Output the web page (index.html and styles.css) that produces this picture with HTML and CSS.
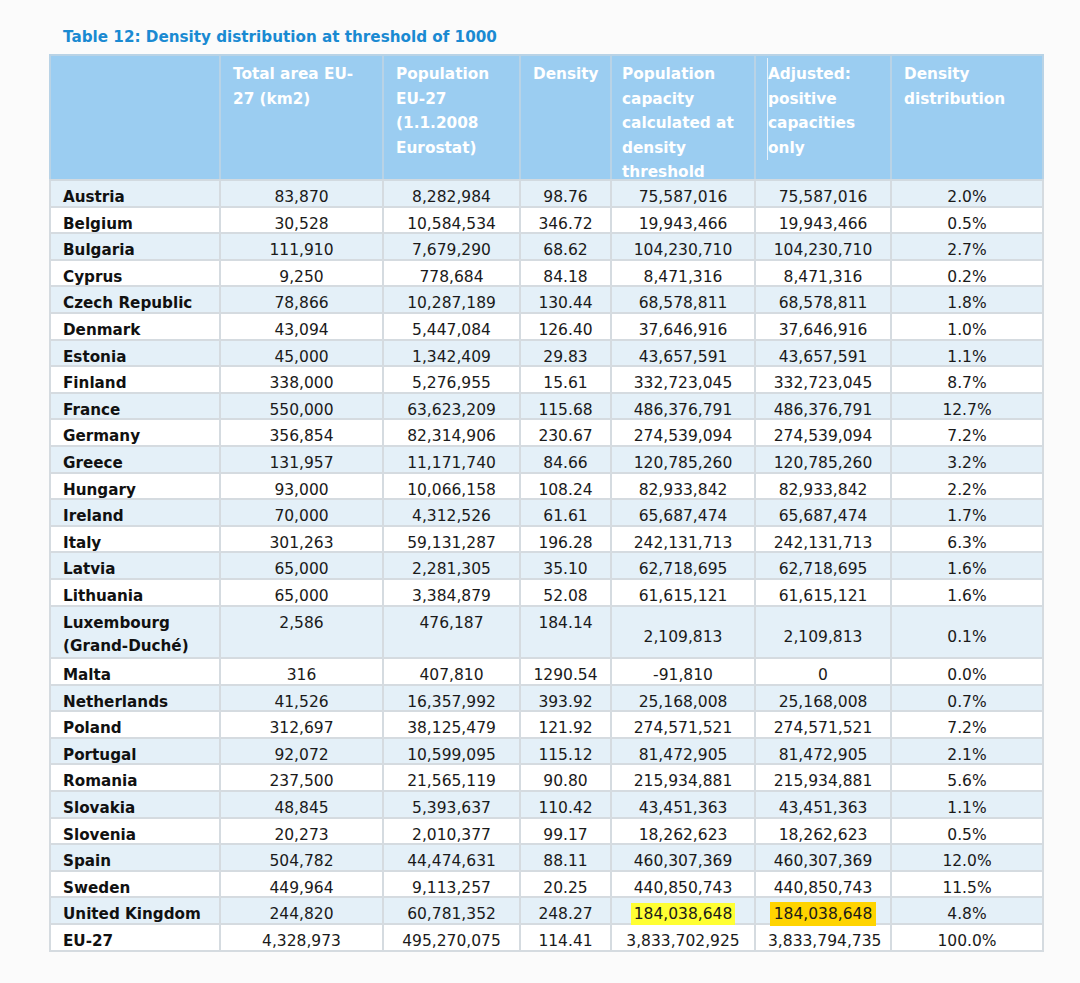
FILE: index.html
```html
<!DOCTYPE html>
<html lang="en">
<head>
<meta charset="utf-8">
<title>Table 12: Density distribution at threshold of 1000</title>
<link rel="stylesheet" href="styles.css">
</head>
<body>
<div class="page">
  <div class="title">Table 12: Density distribution at threshold of 1000</div>
  <table class="data">
    <colgroup>
      <col class="c-country"><col class="c-area"><col class="c-pop"><col class="c-dens"><col class="c-cap"><col class="c-adj"><col class="c-dist">
    </colgroup>
    <thead>
      <tr>
        <th><div class="hd"></div></th>
        <th><div class="hd">Total area EU-<br>27 (km2)</div></th>
        <th><div class="hd">Population<br>EU-27<br>(1.1.2008<br>Eurostat)</div></th>
        <th><div class="hd">Density</div></th>
        <th class="narrow"><div class="hd">Population<br>capacity<br>calculated at<br>density<br>threshold</div></th>
        <th><div class="hd mark">Adjusted:<br>positive<br>capacities<br>only</div></th>
        <th><div class="hd">Density<br>distribution</div></th>
      </tr>
    </thead>
    <tbody>
      <tr class="alt"><th>Austria</th><td>83,870</td><td>8,282,984</td><td>98.76</td><td>75,587,016</td><td>75,587,016</td><td>2.0%</td></tr>
      <tr><th>Belgium</th><td>30,528</td><td>10,584,534</td><td>346.72</td><td>19,943,466</td><td>19,943,466</td><td>0.5%</td></tr>
      <tr class="alt"><th>Bulgaria</th><td>111,910</td><td>7,679,290</td><td>68.62</td><td>104,230,710</td><td>104,230,710</td><td>2.7%</td></tr>
      <tr><th>Cyprus</th><td>9,250</td><td>778,684</td><td>84.18</td><td>8,471,316</td><td>8,471,316</td><td>0.2%</td></tr>
      <tr class="alt"><th>Czech Republic</th><td>78,866</td><td>10,287,189</td><td>130.44</td><td>68,578,811</td><td>68,578,811</td><td>1.8%</td></tr>
      <tr><th>Denmark</th><td>43,094</td><td>5,447,084</td><td>126.40</td><td>37,646,916</td><td>37,646,916</td><td>1.0%</td></tr>
      <tr class="alt"><th>Estonia</th><td>45,000</td><td>1,342,409</td><td>29.83</td><td>43,657,591</td><td>43,657,591</td><td>1.1%</td></tr>
      <tr><th>Finland</th><td>338,000</td><td>5,276,955</td><td>15.61</td><td>332,723,045</td><td>332,723,045</td><td>8.7%</td></tr>
      <tr class="alt"><th>France</th><td>550,000</td><td>63,623,209</td><td>115.68</td><td>486,376,791</td><td>486,376,791</td><td>12.7%</td></tr>
      <tr><th>Germany</th><td>356,854</td><td>82,314,906</td><td>230.67</td><td>274,539,094</td><td>274,539,094</td><td>7.2%</td></tr>
      <tr class="alt"><th>Greece</th><td>131,957</td><td>11,171,740</td><td>84.66</td><td>120,785,260</td><td>120,785,260</td><td>3.2%</td></tr>
      <tr><th>Hungary</th><td>93,000</td><td>10,066,158</td><td>108.24</td><td>82,933,842</td><td>82,933,842</td><td>2.2%</td></tr>
      <tr class="alt"><th>Ireland</th><td>70,000</td><td>4,312,526</td><td>61.61</td><td>65,687,474</td><td>65,687,474</td><td>1.7%</td></tr>
      <tr><th>Italy</th><td>301,263</td><td>59,131,287</td><td>196.28</td><td>242,131,713</td><td>242,131,713</td><td>6.3%</td></tr>
      <tr class="alt"><th>Latvia</th><td>65,000</td><td>2,281,305</td><td>35.10</td><td>62,718,695</td><td>62,718,695</td><td>1.6%</td></tr>
      <tr><th>Lithuania</th><td>65,000</td><td>3,384,879</td><td>52.08</td><td>61,615,121</td><td>61,615,121</td><td>1.6%</td></tr>
      <tr class="alt two"><th>Luxembourg<br>(Grand-Duché)</th><td>2,586</td><td>476,187</td><td>184.14</td><td class="mid">2,109,813</td><td class="mid">2,109,813</td><td class="mid">0.1%</td></tr>
      <tr><th>Malta</th><td>316</td><td>407,810</td><td>1290.54</td><td>-91,810</td><td>0</td><td>0.0%</td></tr>
      <tr class="alt"><th>Netherlands</th><td>41,526</td><td>16,357,992</td><td>393.92</td><td>25,168,008</td><td>25,168,008</td><td>0.7%</td></tr>
      <tr><th>Poland</th><td>312,697</td><td>38,125,479</td><td>121.92</td><td>274,571,521</td><td>274,571,521</td><td>7.2%</td></tr>
      <tr class="alt"><th>Portugal</th><td>92,072</td><td>10,599,095</td><td>115.12</td><td>81,472,905</td><td>81,472,905</td><td>2.1%</td></tr>
      <tr><th>Romania</th><td>237,500</td><td>21,565,119</td><td>90.80</td><td>215,934,881</td><td>215,934,881</td><td>5.6%</td></tr>
      <tr class="alt"><th>Slovakia</th><td>48,845</td><td>5,393,637</td><td>110.42</td><td>43,451,363</td><td>43,451,363</td><td>1.1%</td></tr>
      <tr><th>Slovenia</th><td>20,273</td><td>2,010,377</td><td>99.17</td><td>18,262,623</td><td>18,262,623</td><td>0.5%</td></tr>
      <tr class="alt"><th>Spain</th><td>504,782</td><td>44,474,631</td><td>88.11</td><td>460,307,369</td><td>460,307,369</td><td>12.0%</td></tr>
      <tr><th>Sweden</th><td>449,964</td><td>9,113,257</td><td>20.25</td><td>440,850,743</td><td>440,850,743</td><td>11.5%</td></tr>
      <tr class="alt"><th>United Kingdom</th><td>244,820</td><td>60,781,352</td><td>248.27</td><td><span class="hl-lemon">184,038,648</span></td><td><span class="hl-gold">184,038,648</span></td><td>4.8%</td></tr>
      <tr><th>EU-27</th><td>4,328,973</td><td>495,270,075</td><td>114.41</td><td>3,833,702,925</td><td>3,833,794,735</td><td>100.0%</td></tr>
    </tbody>
  </table>
</div>
</body>
</html>
```

FILE: styles.css
```css
html, body {
  margin: 0;
  background: #fbfbfb;
}

body {
  font-family: "DejaVu Sans", Verdana, sans-serif;
  color: #111;
}

.page {
  padding: 27px 0 0 49px;
}

.title {
  margin: 0 0 7px 14px;
  font-size: 15.2px;
  line-height: 20px;
  font-weight: bold;
  color: #1a8ad2;
}

.data {
  border-collapse: collapse;
  table-layout: fixed;
  width: 995px;
  background: #ffffff;
  border: 2px solid #cfd5da;
}

.c-country { width: 170px; }
.c-area { width: 163px; }
.c-pop { width: 137px; }
.c-dens { width: 91px; }
.c-cap { width: 144px; }
.c-adj { width: 136px; }
.c-dist { width: 152px; }

.data thead th {
  background: #9bcdf1;
  color: #ffffff;
  font-size: 15.3px;
  font-weight: bold;
  text-align: left;
  vertical-align: top;
  line-height: 24.6px;
  padding: 6px 12px 0;
  border: 2px solid #b9d3e6;
  border-bottom-color: #d2dae0;
  white-space: nowrap;
}

.data thead th.narrow {
  padding-left: 10px;
}

.hd {
  height: 117px;
}

.mark {
  position: relative;
}

.mark::before {
  content: "";
  position: absolute;
  left: -1px;
  top: -4px;
  width: 1px;
  height: 102px;
  background: #e6f1fa;
}

.data tbody th,
.data tbody td {
  border: 2px solid #d5dbe0;
  padding: 8px 12px 0;
  line-height: 16.6px;
  font-size: 15.5px;
  vertical-align: top;
  white-space: nowrap;
}

.data tbody th {
  text-align: left;
  font-weight: bold;
  font-size: 15.2px;
  color: #111;
}

.data tbody td {
  text-align: center;
  font-weight: normal;
  color: #1a1a1a;
}

.data tbody tr.alt th,
.data tbody tr.alt td {
  background: #e4f0f8;
}

.data tbody tr.two th,
.data tbody tr.two td {
  line-height: 22.5px;
  padding-top: 5.5px;
  padding-bottom: 0;
}

.data tbody tr.two td.mid {
  vertical-align: middle;
  padding-top: 11px;
}

.hl-lemon {
  background: #ffff33;
  padding: 2px 3px;
}

.hl-gold {
  background: #ffd400;
  padding: 3px 4px;
}
```
